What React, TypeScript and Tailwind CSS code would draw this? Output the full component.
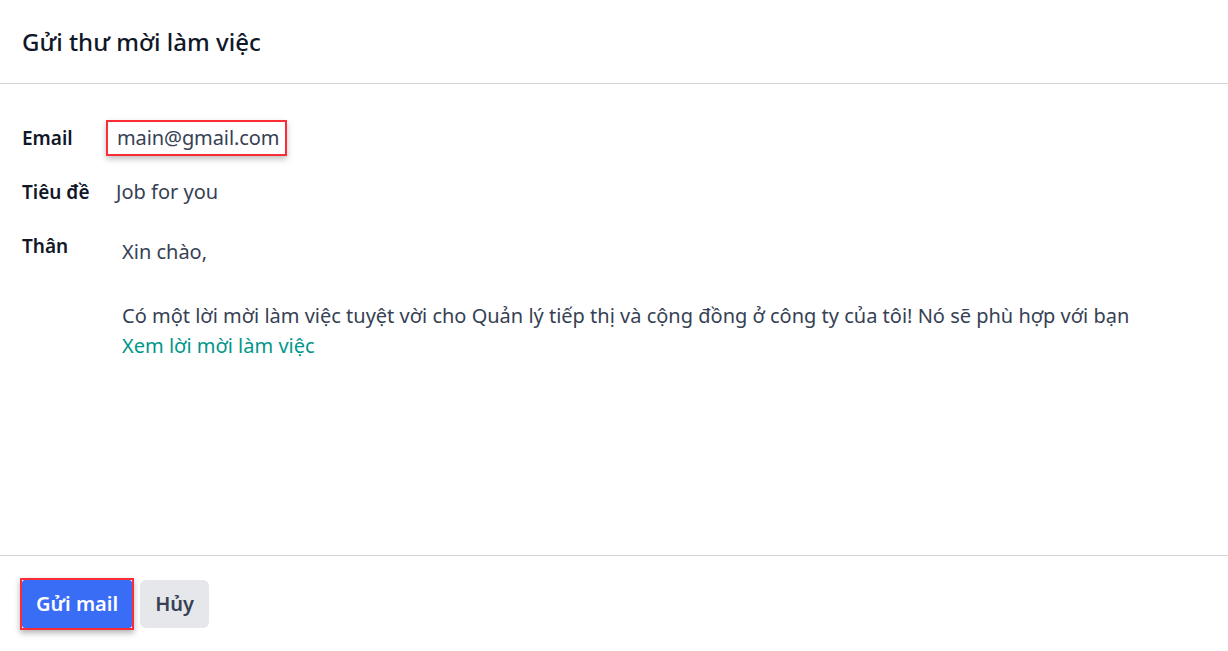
export default function App() {
  return (
    <div
      className="flex h-[651px] w-[1228px] flex-col bg-white text-gray-900"
      style={{ fontFamily: '"Noto Sans", "Open Sans", sans-serif' }}
    >
      <div className="flex h-[84px] items-center border-b border-gray-300 px-[22px]">
        <h1 className="text-[24px] font-medium text-gray-900">Gửi thư mời làm việc</h1>
      </div>

      <div className="flex-1 px-[22px] pt-[36px] text-[20px]">
        <div className="flex h-[36px] items-center">
          <span className="w-[84px] text-[19px] font-semibold text-gray-900">Email</span>
          <span className="flex h-[36px] items-center border-2 border-red-500 pl-[9px] pr-[6px] tracking-[-0.1px] text-gray-700 shadow-[0_3px_6px_rgba(0,0,0,0.25)]">
            main@gmail.com
          </span>
        </div>
        <div className="mt-[18px] flex h-[36px] items-center">
          <span className="w-[94px] text-[19px] font-semibold text-gray-900">Tiêu đề</span>
          <span className="text-gray-700">Job for you</span>
        </div>
        <div className="mt-[21px] flex">
          <span className="w-[100px] text-[19px] font-semibold leading-[30px] text-gray-900">Thân</span>
          <div className="pt-[6px] leading-[30px] text-gray-700">
            <p>Xin chào,</p>
            <p className="mt-[34px]">
              Có một lời mời làm việc tuyệt vời cho Quản lý tiếp thị và cộng đồng ở công ty của tôi! Nó sẽ phù hợp với bạn
            </p>
            <a className="text-teal-600">Xem lời mời làm việc</a>
          </div>
        </div>
      </div>

      <div className="flex h-[96px] items-center gap-[8px] border-t border-gray-300 px-[22px] pt-[1px]">
        <div className="-m-[2px] border-[2px] border-red-500 shadow-[0_3px_6px_rgba(0,0,0,0.3)]">
          <button className="h-[48px] rounded-[3px] bg-[#3a6df5] px-[14px] text-[20px] font-semibold text-white">
            Gửi mail
          </button>
        </div>
        <button className="h-[48px] rounded-[6px] bg-gray-200 px-[15px] text-[20px] font-semibold text-gray-700">
          Hủy
        </button>
      </div>
    </div>
  );
}
